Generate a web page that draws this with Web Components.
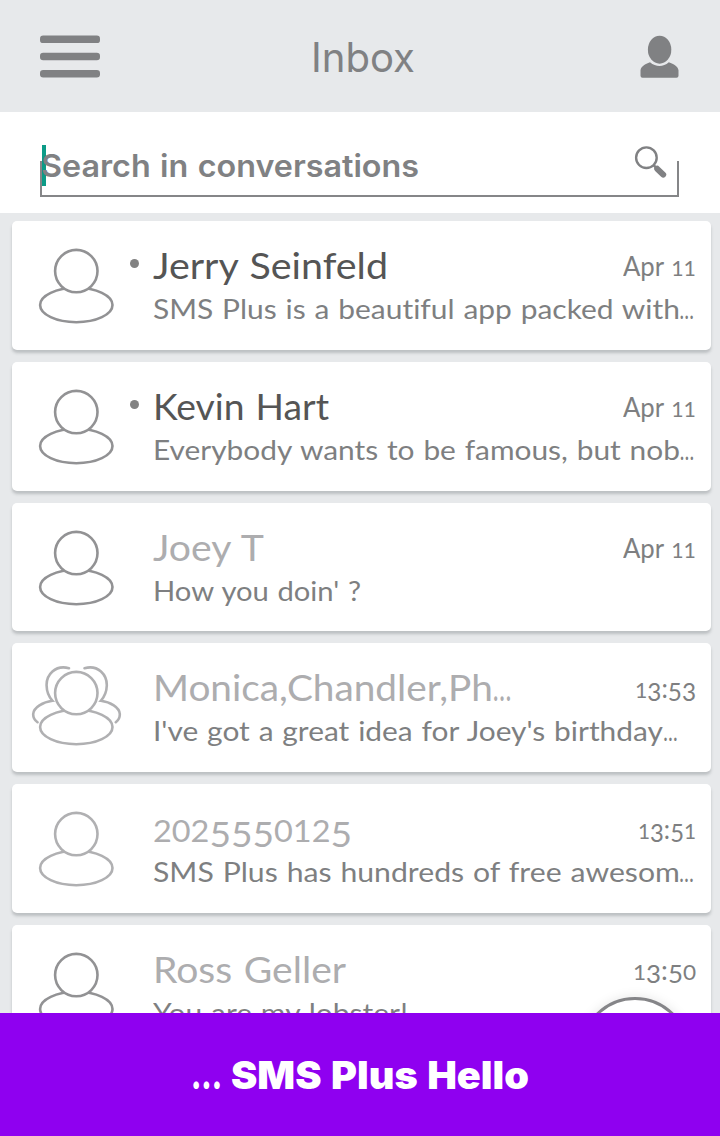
<!DOCTYPE html>
<html lang="en">
<head>
<meta charset="utf-8">
<title>Inbox</title>
<style>
html,body{margin:0;padding:0}
body{width:720px;height:1136px;overflow:hidden;background:#e7e9eb;font-family:Lato,"Open Sans",sans-serif;color:#7e7f81}
</style>
</head>
<body>
<sms-app></sms-app>
<script>
function define(name, html, setup) {
  const template = document.createElement('template');
  template.innerHTML = html;
  customElements.define(name, class extends HTMLElement {
    connectedCallback() {
      if (this.shadowRoot) return;
      const root = this.attachShadow({mode: 'open'});
      root.appendChild(template.content.cloneNode(true));
      if (setup) setup(this, root);
    }
  });
}

/* A single line of text stretched to a given width; numerals are drawn in old style. */
define('fit-text', `
<style>
:host{display:block;white-space:nowrap;line-height:inherit;font-variant-ligatures:none}
.t{display:inline-block;transform-origin:0 50%;line-height:inherit;word-spacing:.04em}
.n{font-size:.83em;line-height:0}
.d{font-size:.95em;line-height:0;vertical-align:-.14em}
.e{display:inline-block;transform:scaleX(.64);transform-origin:0 50%;margin-right:-.28em}
</style><span class="t"></span>`, (host, root) => {
  const t = root.querySelector('.t');
  for (const part of host.getAttribute('text').match(/[34579]+|[01268]+|…|[^0-9…]+/g)) {
    if (/[\d…]/.test(part)) {
      const s = document.createElement('span');
      s.className = part === '…' ? 'e' : /[34579]/.test(part) ? 'd' : 'n';
      s.textContent = part;
      t.append(s);
    } else t.append(part);
  }
  const w = +host.getAttribute('w');
  host.style.width = w + 'px';
  t.style.transform = `scaleX(${w / t.getBoundingClientRect().width})`;
});

define('app-header', `
<style>
:host{display:flex;box-sizing:border-box;height:112px;padding:0 41px 0 40px;justify-content:space-between;align-items:center;background:#e7e9eb}
svg{display:block}
.title{font:400 40.5px/56px Inter,sans-serif;color:#808183;margin-left:-15px;padding-top:3px}
</style>
<svg width="60" height="43" fill="#808183"><rect y=".5" width="60" height="7.6" rx="3.2"/><rect y="17.7" width="60" height="7.6" rx="3.2"/><rect y="34.9" width="60" height="7.6" rx="3.2"/></svg>
<div class="title"><fit-text text="Inbox" w="104"></fit-text></div>
<svg width="39" height="43" fill="#808183" viewBox="0 -.7 39 43"><ellipse cx="19.6" cy="14" rx="11.7" ry="14"/><path d="M0.5 40V34.5C1.2 30.5 5 28.4 10 26.5Q14.5 30.3 19.5 30.3T28.8 26.5C34 28.4 37.8 30.5 38.5 34.5V40Q38.5 42 36.5 42H2.5Q.5 42 .5 40Z"/></svg>`);

define('search-bar', `
<style>
:host{display:block;box-sizing:border-box;height:101px;padding:33px 40px 0;background:#fff}
.field{position:relative;height:51.5px;display:flex;justify-content:space-between}
.frame{position:absolute;left:0;right:1.5px;bottom:0;height:35.5px;box-sizing:border-box;border:2px solid #858688;border-top:0}
.caret{position:absolute;left:1.5px;top:0;width:4px;height:40.5px;background:#0c9b87}
.label{position:relative;margin-left:1px;font:600 31px/41px Inter,sans-serif;color:#808183}
svg{display:block;position:relative;margin-right:13px}
</style>
<div class="field"><div class="frame"></div><div class="caret"></div>
<div class="label"><fit-text text="Search in conversations" w="378"></fit-text></div>
<svg width="34" height="36" fill="none" stroke="#808183"><circle cx="13.4" cy="12.7" r="10.3" stroke-width="2.4"/><path d="M20.6 20.2L24 23.6" stroke-width="2.6"/><path d="M24.2 23.8L30.2 29.6" stroke-width="6" stroke-linecap="round"/></svg></div>`);

define('user-avatar', `
<style>:host{display:block;color:#929294}svg{display:block}:host(:not([group])) .g{display:none}</style>
<svg width="92" height="84" fill="none" stroke="currentColor" stroke-width="2.6">
<ellipse cx="46.3" cy="62" rx="36.2" ry="17.2"/><circle cx="46.3" cy="28.1" r="21.2" fill="#fff"/>
<g class="g" stroke-linecap="round"><path d="M39 3.2C25 -.5 16.3 10 16.6 20.5C16.7 27 19 32 22.5 35.8C13 37 3.6 42.5 3.2 49Q3 54 7.5 57.2"/><path d="M54.5 3.2C68.5 -.5 77 10 76.8 20.5C76.6 27 74.3 32 70.8 35.8C80.3 37 89.5 42.5 89.8 49Q90 54 85.8 57.2"/></g></svg>`);

define('message-card', `
<style>
:host{display:grid;position:relative;box-sizing:border-box;grid-template-columns:123px 543px;padding-left:18px;height:128.8px;background:#fff;border-radius:5px;box-shadow:0 3px 3px rgba(80,85,90,.28)}
.av{padding-top:22px}
.text{display:flex;flex-direction:column;padding-top:22px}
.row{display:flex;justify-content:space-between}
.name{font-size:36.5px;line-height:44px;color:#adadaf}
:host([unread]) .name{color:#555}
.date{font-size:26px;line-height:47px;height:44px}
.preview{font-size:27px;line-height:40px;margin-top:2px}
.dot{display:none;position:absolute;left:118px;top:38px;width:9px;height:9px;border-radius:50%;background:#828282}
:host([unread]) .dot{display:block}
</style>
<div class="av"></div><span class="dot"></span>
<div class="text"><div class="row"><div class="name"></div><div class="date"></div></div><div class="preview"></div></div>`, (host, root) => {
  const av = document.createElement('user-avatar');
  if (host.hasAttribute('group')) av.setAttribute('group', '');
  if (host.hasAttribute('light')) av.style.color = '#b0b0b2';
  root.querySelector('.av').append(av);
  for (const k of ['name', 'date', 'preview']) {
    const [text, w] = host.getAttribute(k).split('|');
    const f = document.createElement('fit-text');
    f.setAttribute('text', text);
    f.setAttribute('w', w);
    root.querySelector('.' + k).append(f);
  }
});

define('compose-button', `
<style>:host{display:block;box-sizing:border-box;width:110px;height:110px;border:3px solid #858588;border-radius:50%;background:#fff;box-shadow:0 0 12px rgba(0,0,0,.1)}</style>`);

define('promo-banner', `
<style>:host{display:flex;justify-content:center;gap:9px;box-sizing:border-box;height:123px;padding-top:34px;background:#8f00f0;color:#fff;font:900 38px/56px Inter,sans-serif}</style>
<slot></slot>`);

define('sms-app', `
<style>
:host{display:grid;grid-template-rows:112px 101px 800px 123px;height:1136px}
main{position:relative;overflow:hidden;display:flex;flex-direction:column;gap:12px;padding:8px 9px 0 12px}
message-card{flex:none}
compose-button{position:absolute;left:580px;top:784px}
</style>
<app-header></app-header>
<search-bar></search-bar>
<main>
<message-card unread name="Jerry Seinfeld|235" date="Apr 11|73" preview="SMS Plus is a beautiful app packed with…|541"></message-card>
<message-card unread name="Kevin Hart|176" date="Apr 11|73" preview="Everybody wants to be famous, but nob…|541"></message-card>
<message-card name="Joey T|111" date="Apr 11|73" preview="How you doin' ?|208"></message-card>
<message-card group light name="Monica,Chandler,Ph…|358" date="13:53|61" preview="I've got a great idea for Joey's birthday…|524"></message-card>
<message-card light name="2025550125|199" date="13:51|58" preview="SMS Plus has hundreds of free awesom…|541"></message-card>
<message-card name="Ross Geller|193" date="13:50|63" preview="You are my lobster!|255"></message-card>
<compose-button></compose-button>
</main>
<promo-banner><fit-text text="..." w="31"></fit-text><fit-text text="SMS Plus Hello" w="298"></fit-text></promo-banner>`);
</script>
</body>
</html>
